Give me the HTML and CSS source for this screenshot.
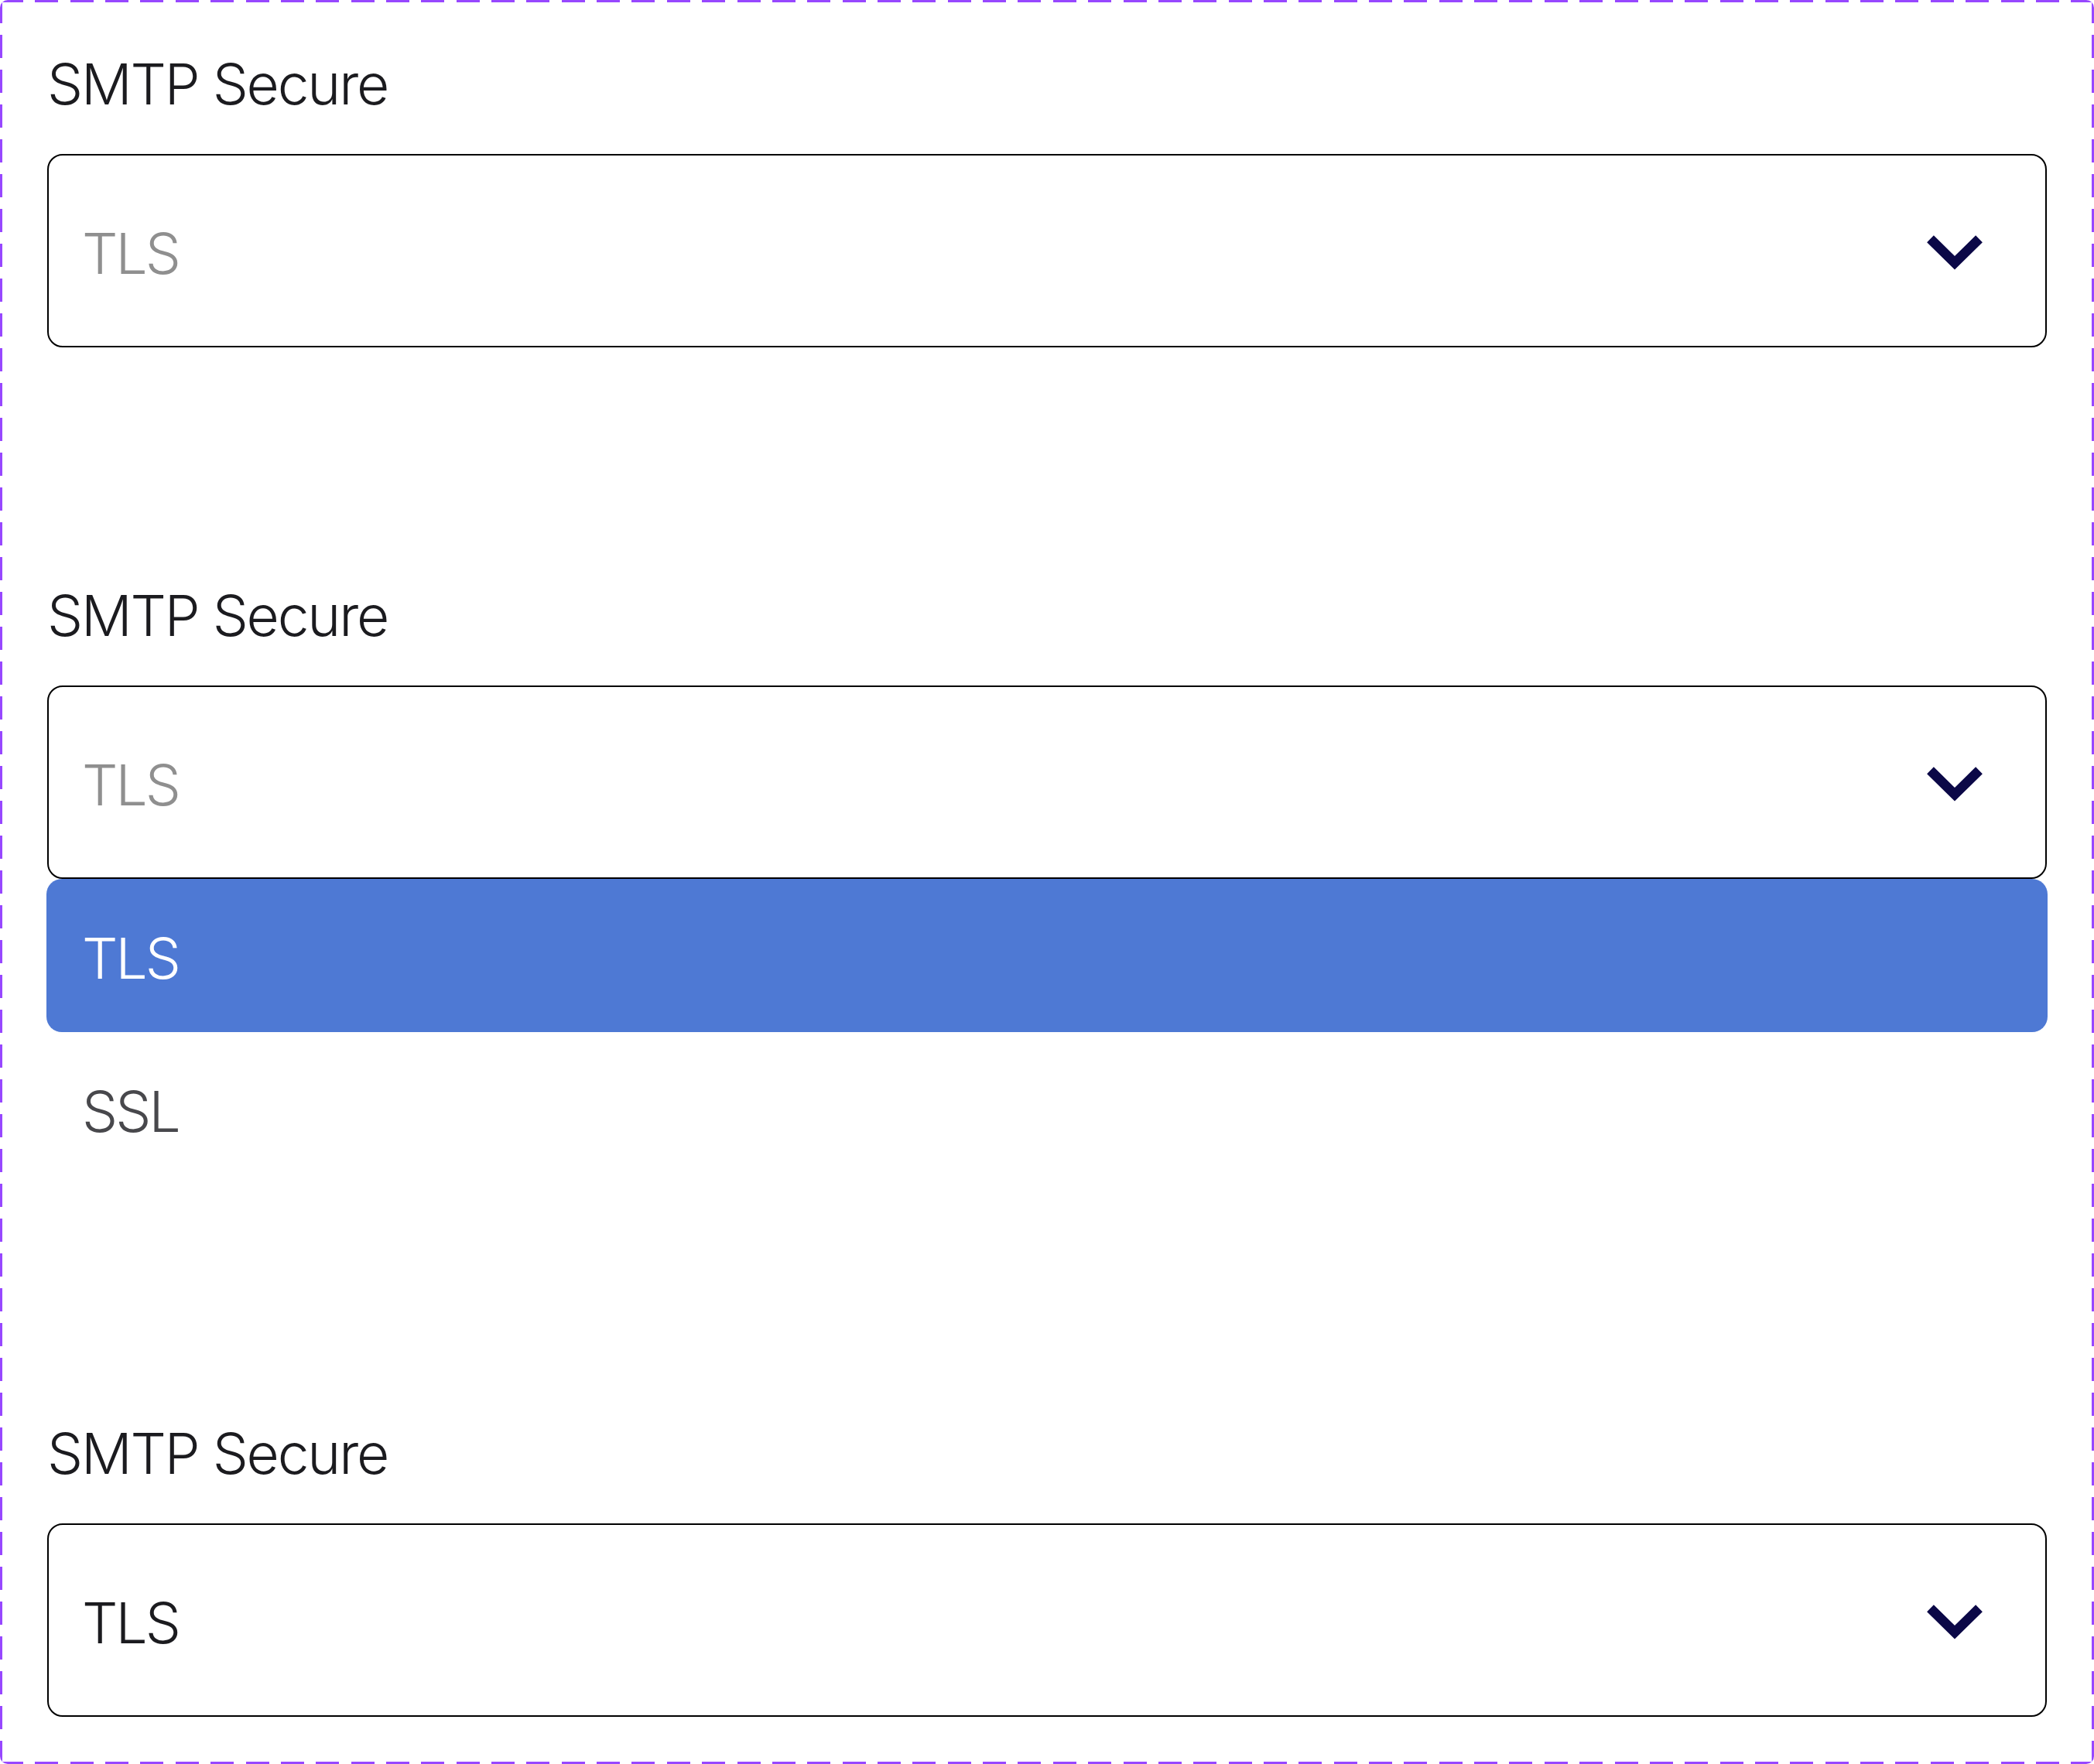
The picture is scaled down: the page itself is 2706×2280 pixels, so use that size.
FILE: index.html
```html
<!DOCTYPE html>
<html lang="en">
<head>
<meta charset="utf-8">
<title>SMTP Secure select</title>
<link rel="stylesheet" href="styles.css">
</head>
<body>
<div class="frame">
  <div class="field">
    <div class="label">SMTP Secure</div>
    <div class="select">
      <span class="value placeholder">TLS</span>
      <svg class="chevron" viewBox="0 0 72 46" aria-hidden="true"><polyline points="4.5,4.8 36,35.8 67.5,4.8"/></svg>
    </div>
  </div>

  <div class="field">
    <div class="label">SMTP Secure</div>
    <div class="select">
      <span class="value placeholder">TLS</span>
      <svg class="chevron" viewBox="0 0 72 46" aria-hidden="true"><polyline points="4.5,4.8 36,35.8 67.5,4.8"/></svg>
    </div>
    <ul class="options">
      <li class="option active">TLS</li>
      <li class="option">SSL</li>
    </ul>
  </div>

  <div class="field">
    <div class="label">SMTP Secure</div>
    <div class="select">
      <span class="value filled">TLS</span>
      <svg class="chevron" viewBox="0 0 72 46" aria-hidden="true"><polyline points="4.5,4.8 36,35.8 67.5,4.8"/></svg>
    </div>
  </div>
</div>
</body>
</html>
```

FILE: styles.css
```css
html, body {
  margin: 0;
  padding: 0;
  background: #ffffff;
}

.frame {
  box-sizing: border-box;
  width: 100%;
  min-height: 100vh;
  padding: 64px 61px 61px;
  display: flex;
  flex-direction: column;
  gap: 302px;
  border-radius: 10px;
  font-family: Inter, "Noto Sans", sans-serif;
  font-weight: 350;
  background:
    repeating-linear-gradient(90deg, #9747ff 0 30px, transparent 30px 45.36px) left top / 100% 3px no-repeat,
    repeating-linear-gradient(90deg, #9747ff 0 30px, transparent 30px 45.36px) left bottom / 100% 3px no-repeat,
    repeating-linear-gradient(180deg, #9747ff 0 30px, transparent 30px 45px) left top / 3px 100% no-repeat,
    repeating-linear-gradient(180deg, #9747ff 0 30px, transparent 30px 45px) right top / 3px 100% no-repeat,
    #ffffff;
}

.field {
  display: flex;
  flex-direction: column;
}

.label {
  font-size: 73px;
  line-height: 89px;
  letter-spacing: -0.03em;
  color: #1b1b1f;
  margin-bottom: 46px;
}

.select {
  box-sizing: border-box;
  height: 250px;
  border: 2px solid #000000;
  border-radius: 20px;
  display: flex;
  align-items: center;
  justify-content: space-between;
  padding: 6px 81px 0 43px;
}

.value {
  font-size: 73px;
  line-height: 89px;
  letter-spacing: -0.04em;
}

.placeholder {
  color: #8f8f8f;
}

.filled {
  color: #1b1b1f;
}

.chevron {
  width: 72px;
  height: 46px;
  fill: none;
  stroke: #0b0847;
  stroke-width: 12.5;
  stroke-linejoin: miter;
  stroke-linecap: butt;
}

.options {
  list-style: none;
  margin: 0 -1px;
  padding: 0;
}

.option {
  box-sizing: border-box;
  height: 198px;
  display: flex;
  align-items: center;
  padding: 7px 0 0 46px;
  font-size: 73px;
  line-height: 89px;
  letter-spacing: -0.04em;
  color: #48484c;
  border-radius: 20px;
}

.option.active {
  background: #4e79d4;
  color: #ffffff;
}
```
